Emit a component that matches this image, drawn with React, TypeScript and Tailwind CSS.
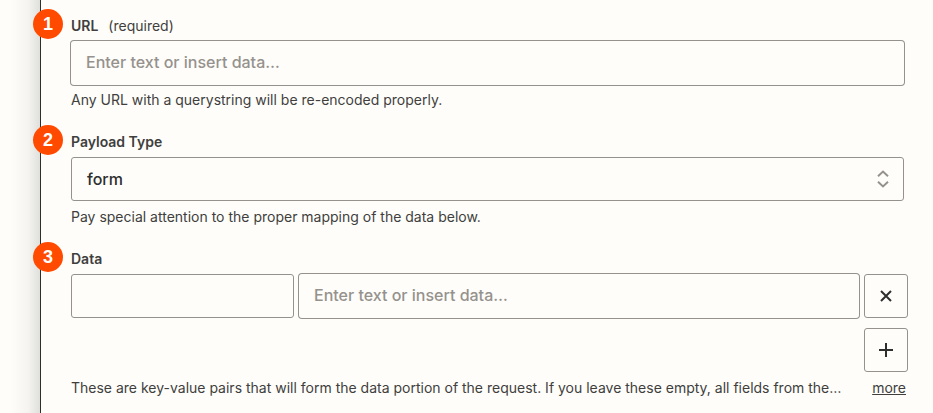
import type { ReactNode } from "react";

const ring = "rounded-[3px] ring-1 ring-[#95928e]";
const box = "h-11 rounded-[3px] border border-[#95928e] bg-transparent";

function Badge({ value }: { value: number }) {
  return (
    <span className="absolute -left-[38px] -top-[7px] flex size-[30px] items-center justify-center rounded-full bg-[#ff4a00] font-['Liberation_Sans',sans-serif] text-[18px] font-bold leading-5 text-white">
      {value}
    </span>
  );
}

function FieldLabel({
  step,
  htmlFor,
  note,
  children,
}: {
  step: number;
  htmlFor: string;
  note?: string;
  children: ReactNode;
}) {
  return (
    <div className="relative mb-[5px] flex gap-[10px]">
      <Badge value={step} />
      <label htmlFor={htmlFor} className="font-semibold">
        {children}
      </label>
      {note && <span>{note}</span>}
    </div>
  );
}

function TextInput({ id, label }: { id: string; label?: string }) {
  return (
    <input
      id={id}
      type="text"
      aria-label={label}
      placeholder="Enter text or insert data…"
      className={`${ring} h-11 w-full min-w-0 flex-1 bg-transparent px-[15px] pb-[3px] text-base font-medium text-[#2d2e2e] outline-none placeholder:text-[#95928e]`}
    />
  );
}

export default function App() {
  return (
    <div className="flex min-h-screen bg-[#fffdf9] font-[Inter,sans-serif] text-sm leading-5 text-[#403f3e]">
      <div className="w-10 shrink-0 bg-linear-to-r from-[#fffdf9] from-25% via-[#f5f4f0] via-70% to-[#dfdfdb]" />
      <main className="flex min-w-0 flex-1 flex-col gap-[22px] border-l border-[#2d2e2e] pt-4 pr-[25px] pl-[30px]">
        <section className="mr-1">
          <FieldLabel step={1} htmlFor="url" note="(required)">
            URL
          </FieldLabel>
          <TextInput id="url" />
          <p className="mt-[5px]">Any URL with a querystring will be re-encoded properly.</p>
        </section>

        <section className="mr-1">
          <FieldLabel step={2} htmlFor="payload-type">
            Payload Type
          </FieldLabel>
          <div className="relative">
            <select
              id="payload-type"
              className={`${box} block w-full appearance-none px-[15px] text-base font-medium text-[#2d2e2e]`}
            >
              <option>form</option>
            </select>
            <svg
              viewBox="0 0 12 18"
              className="pointer-events-none absolute top-[13px] right-[15px] h-[18px] w-3"
              fill="none"
              stroke="#95928e"
              strokeWidth="2"
              aria-hidden="true"
            >
              <path d="M1 6.2 6 1.6l5 4.6M1 11.8l5 4.6 5-4.6" />
            </svg>
          </div>
          <p className="mt-[6px]">Pay special attention to the proper mapping of the data below.</p>
        </section>

        <section>
          <FieldLabel step={3} htmlFor="data-key">
            Data
          </FieldLabel>
          <div className="flex gap-[5px]">
            <input
              id="data-key"
              type="text"
              className={`${box} w-[223px] px-[15px] text-base font-medium`}
            />
            <TextInput id="data-value" label="Data value" />
            <button
              type="button"
              aria-label="Remove row"
              className={`${box} flex w-11 items-center justify-center`}
            >
              <svg viewBox="0 0 12 12" className="size-3" stroke="#2d2e2e" strokeWidth="2" aria-hidden="true">
                <path d="m1 1 10 10M11 1 1 11" />
              </svg>
            </button>
          </div>
          <div className="mt-[10px] flex justify-end">
            <button
              type="button"
              aria-label="Add row"
              className={`${box} flex w-11 items-center justify-center`}
            >
              <svg viewBox="0 0 14 14" className="size-[14px]" stroke="#2d2e2e" strokeWidth="2" aria-hidden="true">
                <path d="M7 0v14M0 7h14" />
              </svg>
            </button>
          </div>
          <div className="mt-[6px] mr-[2px] flex justify-between gap-4">
            <p className="min-w-0 truncate">
              These are key-value pairs that will form the data portion of the request. If you leave these empty, all fields from the…
            </p>
            <a href="#more" className="underline underline-offset-1">
              more
            </a>
          </div>
        </section>
      </main>
    </div>
  );
}
